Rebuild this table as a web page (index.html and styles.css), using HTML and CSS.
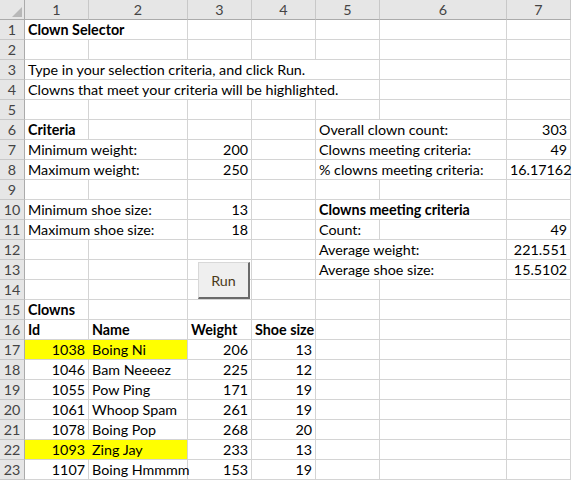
FILE: index.html
```html
<!DOCTYPE html>
<html>
<head>
<meta charset="utf-8">
<link rel="stylesheet" href="styles.css">
</head>
<body>
<div class="sheet">
  <div class="corner"><svg width="25" height="20" viewBox="0 0 25 20"><polygon points="22,7 22,17 12,17" fill="#b8b8b8"/></svg></div>
  <div class="ch">1</div><div class="ch">2</div><div class="ch">3</div><div class="ch">4</div><div class="ch">5</div><div class="ch">6</div><div class="ch">7</div>

  <div class="rh">1</div><div class="c b s2">Clown Selector</div><div class="c"></div><div class="c"></div><div class="c"></div><div class="c"></div><div class="c"></div>
  <div class="rh">2</div><div class="c"></div><div class="c"></div><div class="c"></div><div class="c"></div><div class="c"></div><div class="c"></div><div class="c"></div>
  <div class="rh">3</div><div class="c s5">Type in your selection criteria, and click Run.</div><div class="c"></div><div class="c"></div>
  <div class="rh">4</div><div class="c s5">Clowns that meet your criteria will be highlighted.</div><div class="c"></div><div class="c"></div>
  <div class="rh">5</div><div class="c"></div><div class="c"></div><div class="c"></div><div class="c"></div><div class="c"></div><div class="c"></div><div class="c"></div>
  <div class="rh">6</div><div class="c b">Criteria</div><div class="c"></div><div class="c"></div><div class="c"></div><div class="c s2">Overall clown count:</div><div class="c n">303</div>
  <div class="rh">7</div><div class="c s2">Minimum weight:</div><div class="c n">200</div><div class="c"></div><div class="c s2">Clowns meeting criteria:</div><div class="c n">49</div>
  <div class="rh">8</div><div class="c s2">Maximum weight:</div><div class="c n">250</div><div class="c"></div><div class="c s2">% clowns meeting criteria:</div><div class="c n">16.17162</div>
  <div class="rh">9</div><div class="c"></div><div class="c"></div><div class="c"></div><div class="c"></div><div class="c"></div><div class="c"></div><div class="c"></div>
  <div class="rh">10</div><div class="c s2">Minimum shoe size:</div><div class="c n">13</div><div class="c"></div><div class="c b s2">Clowns meeting criteria</div><div class="c"></div>
  <div class="rh">11</div><div class="c s2">Maximum shoe size:</div><div class="c n">18</div><div class="c"></div><div class="c">Count:</div><div class="c"></div><div class="c n">49</div>
  <div class="rh">12</div><div class="c"></div><div class="c"></div><div class="c"></div><div class="c"></div><div class="c s2">Average weight:</div><div class="c n">221.551</div>
  <div class="rh">13</div><div class="c"></div><div class="c"></div><div class="c"></div><div class="c"></div><div class="c s2">Average shoe size:</div><div class="c n">15.5102</div>
  <div class="rh">14</div><div class="c"></div><div class="c"></div><div class="c"></div><div class="c"></div><div class="c"></div><div class="c"></div><div class="c"></div>
  <div class="rh">15</div><div class="c b">Clowns</div><div class="c"></div><div class="c"></div><div class="c"></div><div class="c"></div><div class="c"></div><div class="c"></div>
  <div class="rh">16</div><div class="c b">Id</div><div class="c b">Name</div><div class="c b">Weight</div><div class="c b">Shoe size</div><div class="c"></div><div class="c"></div><div class="c"></div>
  <div class="rh">17</div><div class="c n hl hl1">1038</div><div class="c hl">Boing Ni</div><div class="c n">206</div><div class="c n">13</div><div class="c"></div><div class="c"></div><div class="c"></div>
  <div class="rh">18</div><div class="c n">1046</div><div class="c">Bam Neeeez</div><div class="c n">225</div><div class="c n">12</div><div class="c"></div><div class="c"></div><div class="c"></div>
  <div class="rh">19</div><div class="c n">1055</div><div class="c">Pow Ping</div><div class="c n">171</div><div class="c n">19</div><div class="c"></div><div class="c"></div><div class="c"></div>
  <div class="rh">20</div><div class="c n">1061</div><div class="c">Whoop Spam</div><div class="c n">261</div><div class="c n">19</div><div class="c"></div><div class="c"></div><div class="c"></div>
  <div class="rh">21</div><div class="c n">1078</div><div class="c">Boing Pop</div><div class="c n">268</div><div class="c n">20</div><div class="c"></div><div class="c"></div><div class="c"></div>
  <div class="rh">22</div><div class="c n hl hl1">1093</div><div class="c hl">Zing Jay</div><div class="c n">233</div><div class="c n">13</div><div class="c"></div><div class="c"></div><div class="c"></div>
  <div class="rh">23</div><div class="c n">1107</div><div class="c">Boing Hmmmm</div><div class="c n">153</div><div class="c n">19</div><div class="c"></div><div class="c"></div><div class="c"></div>

  <button class="run">Run</button>
</div>
</body>
</html>
```
FILE: styles.css
```css
html, body {
  margin: 0;
  padding: 0;
  background: #ffffff;
}
.sheet {
  position: relative;
  display: grid;
  grid-template-columns: 25px 64px 99px 64px 64px 64px 127px 64px;
  grid-auto-rows: 20px;
  width: 571px;
  font-family: Lato, "Liberation Sans", sans-serif;
  font-size: 14.3px;
  color: #000;
}
.corner {
  background: #e6e6e6;
  border-right: 1px solid #ababab;
  border-bottom: 1px solid #ababab;
  box-sizing: border-box;
  line-height: 0;
}
.ch {
  background: #e6e6e6;
  border-right: 1px solid #c8c8c8;
  border-bottom: 1px solid #ababab;
  box-sizing: border-box;
  text-align: center;
  line-height: 20px;
  color: #444;
}
.rh {
  background: #e6e6e6;
  border-right: 1px solid #ababab;
  border-bottom: 1px solid #c8c8c8;
  box-sizing: border-box;
  text-align: center;
  line-height: 20px;
  color: #444;
}
.c {
  border-right: 1px solid #d4d4d4;
  border-bottom: 1px solid #d4d4d4;
  box-sizing: border-box;
  line-height: 20px;
  padding: 0 3px;
  white-space: nowrap;
  overflow: visible;
}
.b { font-weight: bold; }
.n { text-align: right; }
.s2 { grid-column: span 2; }
.s5 { grid-column: span 5; }
.hl { background: #ffff00; }
.hl1 { border-right-color: #ffff00; }
.run {
  position: absolute;
  left: 198px;
  top: 262px;
  width: 52px;
  height: 37px;
  margin: 0;
  padding: 0;
  background: #efefef;
  border-style: solid;
  border-width: 1px 2px 2px 1px;
  border-color: #d8d8d8 #6a6a6a #6a6a6a #d8d8d8;
  font-family: Lato, "Liberation Sans", sans-serif;
  font-size: 14.3px;
  color: #4a3a1a;
}
```
